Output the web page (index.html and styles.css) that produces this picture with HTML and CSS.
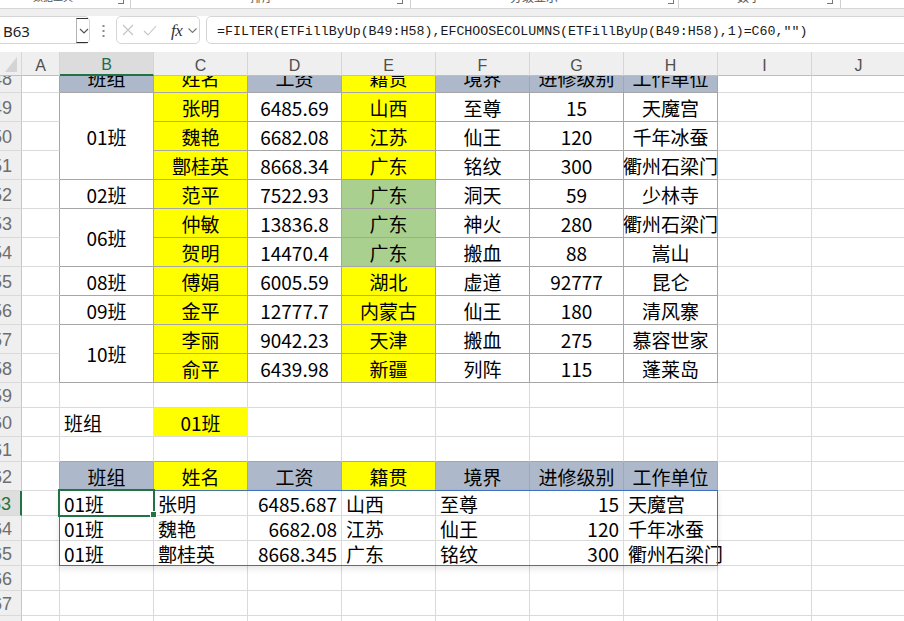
FILE: index.html
```html
<!DOCTYPE html>
<html lang="zh-CN">
<head>
<meta charset="utf-8">
<title>FILTER</title>
<link rel="stylesheet" href="styles.css">
</head>
<body>
<div class="ribbon-tail">
  <span class="lbl l1">数据工具</span><span class="launch li1"></span><span class="sep s1"></span>
  <span class="lbl l2">排序</span><span class="launch li2"></span><span class="sep s2"></span>
  <span class="lbl l3">分级显示</span><span class="launch li3"></span><span class="sep s3"></span>
  <span class="lbl l4">数字</span><span class="launch li4"></span><span class="sep s4"></span>
</div>
<div class="band"></div>
<div class="fbar">
  <div class="namebox">
    <span class="nb-text">B63</span>
    <span class="nb-btn">
      <svg width="10" height="6" viewBox="0 0 10 6"><polyline points="1,1 5,5 9,1" fill="none" stroke="#555" stroke-width="1.2"/></svg>
    </span>
  </div>
  <div class="dots">
    <svg width="3" height="12" viewBox="0 0 3 12"><rect x="0.5" y="0" width="2" height="2" fill="#8a8a8a"/><rect x="0.5" y="5" width="2" height="2" fill="#8a8a8a"/><rect x="0.5" y="10" width="2" height="2" fill="#8a8a8a"/></svg>
  </div>
  <div class="fxbox">
    <svg class="ico-x" width="12" height="12" viewBox="0 0 12 12"><path d="M1 1 L11 11 M11 1 L1 11" stroke="#c4c4c4" stroke-width="1.1" fill="none"/></svg>
    <svg class="ico-ok" width="14" height="11" viewBox="0 0 14 11"><polyline points="1,6 5,10 13,1" fill="none" stroke="#c4c4c4" stroke-width="1.1"/></svg>
    <span class="fx">fx</span>
    <svg class="ico-dd" width="9" height="5" viewBox="0 0 9 5"><polyline points="0.5,0.5 4.5,4.5 8.5,0.5" fill="none" stroke="#777" stroke-width="1.1"/></svg>
  </div>
  <div class="formula">=FILTER(ETFillByUp(B49:H58),EFCHOOSECOLUMNS(ETFillByUp(B49:H58),1)=C60,"")</div>
</div>

<div class="sheet">
  <!-- column headers -->
  <div class="corner"><svg width="12" height="15" viewBox="0 0 12 15"><polygon points="12,0 12,15 0,15" fill="#d4d4d4"/></svg></div>
  <div class="ch">A</div><div class="ch sel">B</div><div class="ch">C</div><div class="ch">D</div><div class="ch">E</div><div class="ch">F</div><div class="ch">G</div><div class="ch">H</div><div class="ch">I</div><div class="ch">J</div>

  <!-- row 48 (partly scrolled) -->
  <div class="rh clip"><span>48</span></div>
  <div class="c eR"></div>
  <div class="c tb ctr gb clip"><span>班组</span></div>
  <div class="c tb ctr y clip"><span>姓名</span></div>
  <div class="c tb ctr gb clip"><span>工资</span></div>
  <div class="c tb ctr y clip"><span>籍贯</span></div>
  <div class="c tb ctr gb clip"><span>境界</span></div>
  <div class="c tb ctr gb clip"><span>进修级别</span></div>
  <div class="c tb ctr gb clip"><span>工作单位</span></div>
  <div class="c"></div><div class="c"></div>

  <!-- row 49 -->
  <div class="rh">49</div><div class="c eR"></div>
  <div class="c tb ctr m3">01班</div>
  <div class="c tb ctr y">张明</div><div class="c tb ctr">6485.69</div><div class="c tb ctr y">山西</div><div class="c tb ctr">至尊</div><div class="c tb ctr">15</div><div class="c tb ctr">天魔宫</div>
  <div class="c"></div><div class="c"></div>
  <!-- row 50 -->
  <div class="rh">50</div><div class="c eR"></div>
  <div class="c tb ctr y">魏艳</div><div class="c tb ctr">6682.08</div><div class="c tb ctr y">江苏</div><div class="c tb ctr">仙王</div><div class="c tb ctr">120</div><div class="c tb ctr">千年冰蚕</div>
  <div class="c"></div><div class="c"></div>
  <!-- row 51 -->
  <div class="rh">51</div><div class="c eR"></div>
  <div class="c tb ctr y">鄷桂英</div><div class="c tb ctr">8668.34</div><div class="c tb ctr y">广东</div><div class="c tb ctr">铭纹</div><div class="c tb ctr">300</div><div class="c tb ctr">衢州石梁门</div>
  <div class="c"></div><div class="c"></div>
  <!-- row 52 -->
  <div class="rh">52</div><div class="c eR"></div>
  <div class="c tb ctr">02班</div>
  <div class="c tb ctr y">范平</div><div class="c tb ctr">7522.93</div><div class="c tb ctr g">广东</div><div class="c tb ctr">洞天</div><div class="c tb ctr">59</div><div class="c tb ctr">少林寺</div>
  <div class="c"></div><div class="c"></div>
  <!-- row 53 -->
  <div class="rh">53</div><div class="c eR"></div>
  <div class="c tb ctr m2">06班</div>
  <div class="c tb ctr y">仲敏</div><div class="c tb ctr">13836.8</div><div class="c tb ctr g">广东</div><div class="c tb ctr">神火</div><div class="c tb ctr">280</div><div class="c tb ctr">衢州石梁门</div>
  <div class="c"></div><div class="c"></div>
  <!-- row 54 -->
  <div class="rh">54</div><div class="c eR"></div>
  <div class="c tb ctr y">贺明</div><div class="c tb ctr">14470.4</div><div class="c tb ctr g">广东</div><div class="c tb ctr">搬血</div><div class="c tb ctr">88</div><div class="c tb ctr">嵩山</div>
  <div class="c"></div><div class="c"></div>
  <!-- row 55 -->
  <div class="rh">55</div><div class="c eR"></div>
  <div class="c tb ctr">08班</div>
  <div class="c tb ctr y">傅娟</div><div class="c tb ctr">6005.59</div><div class="c tb ctr y">湖北</div><div class="c tb ctr">虚道</div><div class="c tb ctr">92777</div><div class="c tb ctr">昆仑</div>
  <div class="c"></div><div class="c"></div>
  <!-- row 56 -->
  <div class="rh">56</div><div class="c eR"></div>
  <div class="c tb ctr">09班</div>
  <div class="c tb ctr y">金平</div><div class="c tb ctr">12777.7</div><div class="c tb ctr y">内蒙古</div><div class="c tb ctr">仙王</div><div class="c tb ctr">180</div><div class="c tb ctr">清风寨</div>
  <div class="c"></div><div class="c"></div>
  <!-- row 57 -->
  <div class="rh">57</div><div class="c eR"></div>
  <div class="c tb ctr m2">10班</div>
  <div class="c tb ctr y">李丽</div><div class="c tb ctr">9042.23</div><div class="c tb ctr y">天津</div><div class="c tb ctr">搬血</div><div class="c tb ctr">275</div><div class="c tb ctr">慕容世家</div>
  <div class="c"></div><div class="c"></div>
  <!-- row 58 -->
  <div class="rh">58</div><div class="c eR"></div>
  <div class="c tb ctr y">俞平</div><div class="c tb ctr">6439.98</div><div class="c tb ctr y">新疆</div><div class="c tb ctr">列阵</div><div class="c tb ctr">115</div><div class="c tb ctr">蓬莱岛</div>
  <div class="c"></div><div class="c"></div>

  <!-- row 59 -->
  <div class="rh">59</div>
  <div class="c"></div><div class="c"></div><div class="c"></div><div class="c"></div><div class="c"></div><div class="c"></div><div class="c"></div><div class="c"></div><div class="c"></div><div class="c"></div>
  <!-- row 60 -->
  <div class="rh">60</div>
  <div class="c"></div>
  <div class="c yl">班组</div>
  <div class="c ctr y yb">01班</div>
  <div class="c"></div><div class="c"></div><div class="c"></div><div class="c"></div><div class="c"></div><div class="c"></div><div class="c"></div>
  <!-- row 61 -->
  <div class="rh">61</div>
  <div class="c"></div>
  <div class="c eB"></div><div class="c eB"></div><div class="c eB"></div><div class="c eB"></div><div class="c eB"></div><div class="c eB"></div><div class="c eB"></div>
  <div class="c"></div><div class="c"></div>
  <!-- row 62 -->
  <div class="rh">62</div>
  <div class="c eR"></div>
  <div class="c tb ctr gb">班组</div>
  <div class="c tb ctr y">姓名</div>
  <div class="c tb ctr gb">工资</div>
  <div class="c tb ctr y">籍贯</div>
  <div class="c tb ctr gb">境界</div>
  <div class="c tb ctr gb">进修级别</div>
  <div class="c tb ctr gb">工作单位</div>
  <div class="c"></div><div class="c"></div>
  <!-- row 63 -->
  <div class="rh sel">63</div>
  <div class="c"></div>
  <div class="c">01班</div><div class="c">张明</div><div class="c rt">6485.687</div><div class="c">山西</div><div class="c">至尊</div><div class="c rt">15</div><div class="c">天魔宫</div>
  <div class="c"></div><div class="c"></div>
  <!-- row 64 -->
  <div class="rh">64</div>
  <div class="c"></div>
  <div class="c">01班</div><div class="c">魏艳</div><div class="c rt">6682.08</div><div class="c">江苏</div><div class="c">仙王</div><div class="c rt">120</div><div class="c">千年冰蚕</div>
  <div class="c"></div><div class="c"></div>
  <!-- row 65 -->
  <div class="rh">65</div>
  <div class="c"></div>
  <div class="c">01班</div><div class="c">鄷桂英</div><div class="c rt">8668.345</div><div class="c">广东</div><div class="c">铭纹</div><div class="c rt">300</div><div class="c">衢州石梁门</div>
  <div class="c"></div><div class="c"></div>
  <!-- row 66 -->
  <div class="rh">66</div>
  <div class="c"></div><div class="c"></div><div class="c"></div><div class="c"></div><div class="c"></div><div class="c"></div><div class="c"></div><div class="c"></div><div class="c"></div><div class="c"></div>
  <!-- row 67 -->
  <div class="rh">67</div>
  <div class="c"></div><div class="c"></div><div class="c"></div><div class="c"></div><div class="c"></div><div class="c"></div><div class="c"></div><div class="c"></div><div class="c"></div><div class="c"></div>
  <!-- row 68 -->
  <div class="rh">68</div>
  <div class="c"></div><div class="c"></div><div class="c"></div><div class="c"></div><div class="c"></div><div class="c"></div><div class="c"></div><div class="c"></div><div class="c"></div><div class="c"></div>

  <!-- overlays: spill range outline and active cell -->
  <div class="spill"></div>
  <div class="selection"><span class="handle"></span></div>
</div>
</body>
</html>
```

FILE: styles.css
```css
html, body {
  margin: 0;
  padding: 0;
}
body {
  width: 904px;
  height: 621px;
  overflow: hidden;
  background: #ffffff;
  font-family: "Noto Sans CJK SC", "Noto Sans", sans-serif;
  color: #000;
}

/* ribbon remnants at the very top */
.ribbon-tail {
  height: 8px;
  border-bottom: 1px solid #d6d6d6;
  display: flex;
  overflow: hidden;
  font-size: 12px;
  color: #555;
}
.lbl {
  display: block;
  line-height: 12px;
  margin-top: -9px;
  white-space: nowrap;
  flex-shrink: 0;
}
.launch {
  display: block;
  width: 5px;
  height: 5px;
  margin-top: -2px;
  border-right: 1px solid #777;
  border-bottom: 1px solid #777;
  flex-shrink: 0;
}
.sep {
  display: block;
  width: 1px;
  height: 8px;
  background: #cfcfcf;
  flex-shrink: 0;
}
.l1 { margin-left: 33px; width: 30px; font-size: 10px; }
.li1 { margin-left: 55px; }
.s1 { margin-left: 6px; }
.l2 { margin-left: 119px; width: 24px; }
.li2 { margin-left: 123px; }
.s2 { margin-left: 7px; }
.l3 { margin-left: 99px; width: 50px; }
.li3 { margin-left: 108px; }
.s3 { margin-left: 4px; }
.l4 { margin-left: 58px; width: 24px; }
.li4 { margin-left: 66px; }
.s4 { margin-left: 7px; }

.band {
  height: 7px;
  background: #efefef;
}

/* formula bar */
.fbar {
  display: flex;
  height: 28px;
  margin-bottom: 8px;
}
.namebox {
  box-sizing: border-box;
  margin-left: -10px;
  width: 100px;
  flex-shrink: 0;
  border: 1px solid #d5d5d5;
  border-radius: 5px;
  display: flex;
  align-items: center;
  padding-left: 12px;
  padding-top: 2px;
  font-family: "Noto Sans", sans-serif;
  font-size: 15px;
  color: #222;
}
.nb-btn {
  margin-left: auto;
  align-self: stretch;
  margin-top: -1px;
  width: 12px;
  box-sizing: border-box;
  border-left: 1px solid #b5b5b5;
  border-top: 1px solid #333;
  border-bottom: 1px solid #333;
  margin-right: 1px;
  display: flex;
  align-items: center;
  justify-content: flex-end;
  background: linear-gradient(#fff, #fff) no-repeat 4px 1px / 10px 22px;
}
.nb-btn svg { margin-right: -1px; }
.dots {
  width: 26px;
  flex-shrink: 0;
  display: flex;
  align-items: center;
  justify-content: center;
  padding-top: 2px;
}
.fxbox {
  box-sizing: border-box;
  width: 84px;
  flex-shrink: 0;
  border: 1px solid #d5d5d5;
  border-radius: 5px;
  display: flex;
  align-items: center;
  padding-left: 5px;
}
.ico-ok { margin-left: 9px; }
.fx {
  margin-left: 14px;
  font-family: "Liberation Serif", serif;
  font-style: italic;
  font-size: 17px;
  color: #333;
  letter-spacing: -0.5px;
  line-height: 1;
}
.ico-dd { margin-left: 6px; }
.formula {
  flex: 1;
  margin-left: 6px;
  margin-right: -20px;
  border: 1px solid #d5d5d5;
  border-radius: 5px;
  display: flex;
  align-items: center;
  padding-left: 10px;
  padding-top: 3px;
  box-sizing: border-box;
  font-family: "Liberation Mono", monospace;
  font-size: 13.3px;
  color: #1a1a1a;
  white-space: nowrap;
}

/* sheet grid */
.sheet {
  position: relative;
  display: grid;
  grid-template-columns: 22px 38px repeat(9, 94px);
  grid-template-rows: 24px 17px repeat(10, 29px) 25px 29px 25px 29px 25px 25px 25px 25px 25px 25px;
}
.sheet > div {
  box-sizing: border-box;
  min-width: 0;
}
.corner {
  background: #efefef;
  border-right: 1px solid #d6d6d6;
  border-bottom: 1px solid #bfbfbf;
  display: flex;
  justify-content: flex-end;
  align-items: flex-end;
  padding: 0 4px 3px 0;
}
.ch {
  background: #efefef;
  border-right: 1px solid #d6d6d6;
  border-bottom: 1px solid #bfbfbf;
  display: flex;
  justify-content: center;
  align-items: center;
  padding-top: 4px;
  font-family: "Liberation Sans", sans-serif;
  font-size: 16px;
  color: #4f4f4f;
}
.ch.sel {
  background: #dcdcdc;
  border-bottom: 2px solid #217346;
  color: #1d6b55;
}
.rh {
  background: #efefef;
  border-right: 1px solid #c8c8c8;
  border-bottom: 1px solid #d9d9d9;
  display: flex;
  justify-content: flex-end;
  align-items: center;
  padding-right: 9px;
  padding-top: 2px;
  font-family: "Liberation Sans", sans-serif;
  font-size: 18px;
  color: #6e6e6e;
  white-space: nowrap;
}
.rh.sel {
  background: #dedede;
  border-right: 2px solid #217346;
  color: #217346;
}

.c {
  border-right: 1px solid #dadada;
  border-bottom: 1px solid #dadada;
  display: flex;
  align-items: center;
  padding: 0 4px;
  white-space: nowrap;
  font-size: 19px;
}
.ctr { justify-content: center; }
.rt { justify-content: flex-end; }
.tb { border-color: #a6a6a6; }
.eR { border-right-color: #a6a6a6; }
.eB { border-bottom-color: #a6a6a6; }
.gb { background: #adb9ca; }
.y { background: #ffff00; }
.g { background: #a9d08e; }
.yl { border-right-color: #ffff00; }
.yb { border-right-color: #ffff00; }
.m3 { grid-row: span 3; }
.m2 { grid-row: span 2; }

.clip {
  overflow: hidden;
  align-items: flex-end;
}
.clip > span {
  display: block;
  flex-shrink: 0;
  height: 28px;
  line-height: 28px;
}
.rh.clip > span { line-height: 30px; }

/* overlays: spill range outline and active cell */
.spill {
  position: absolute;
  grid-column: 3 / 10;
  grid-row: 17 / 20;
  top: -1px;
  left: -1px;
  right: 0;
  bottom: 0;
  border: 1px solid #3f6fbf;
  box-shadow: 0 3px 6px rgba(0, 0, 0, 0.10);
  pointer-events: none;
}
.selection {
  position: absolute;
  grid-column: 3 / 4;
  grid-row: 17 / 18;
  top: -2px;
  left: -2px;
  right: -1px;
  bottom: -1px;
  border: 2px solid #217346;
  pointer-events: none;
}
.handle {
  position: absolute;
  right: -3px;
  bottom: -2px;
  width: 5px;
  height: 5px;
  background: #217346;
  outline: 1px solid #ffffff;
}
```
